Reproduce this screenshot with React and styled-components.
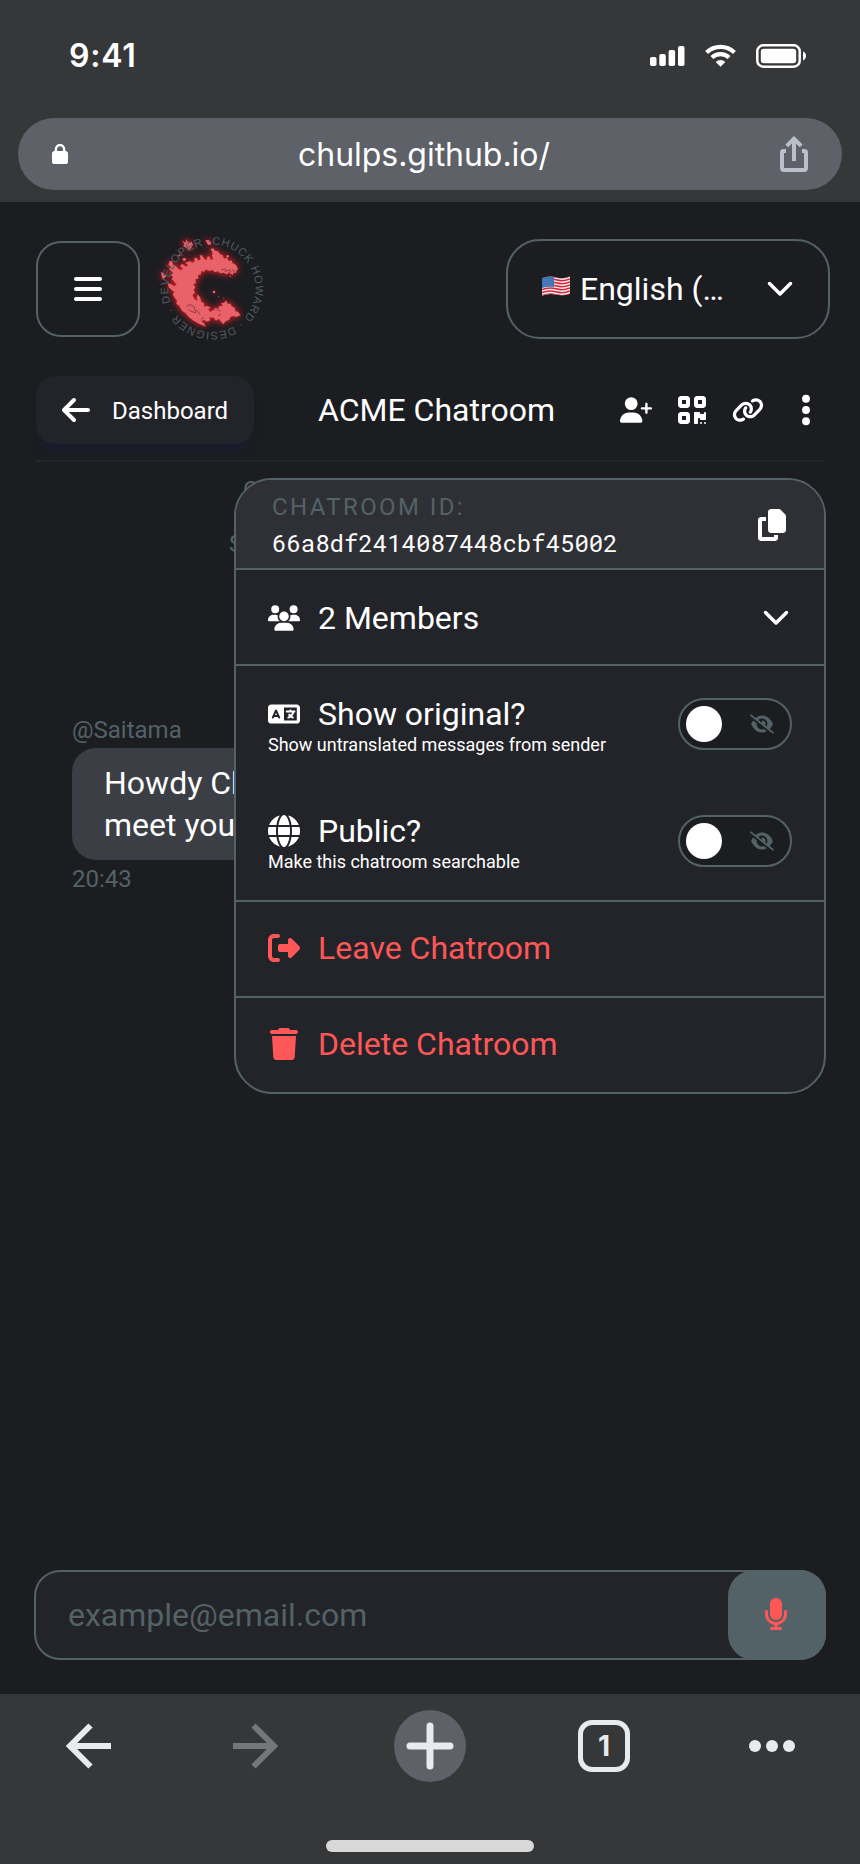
import React from "react";
import styled, { createGlobalStyle } from "styled-components";
import {
  FaArrowLeft,
  FaBars,
  FaChevronDown,
  FaCopy,
  FaEllipsisVertical,
  FaEyeSlash,
  FaGlobe,
  FaLanguage,
  FaLink,
  FaMicrophone,
  FaQrcode,
  FaRightFromBracket,
  FaTrash,
  FaUserPlus,
  FaUsers,
} from "react-icons/fa6";

const line = "#536267";
const chrome = "#363739";
const panel = "#232429";

const GlobalStyle = createGlobalStyle`
  * { box-sizing: border-box; }
  body { margin: 0; background: #1c1d21; }
  button { font: inherit; color: inherit; padding: 0; margin: 0; background: none; border: 0; }
  svg { display: block; flex: none; }
`;

const Screen = styled.div`
  width: 860px;
  height: 1864px;
  display: flex;
  flex-direction: column;
  overflow: hidden;
  background: #1c1d21;
  color: #fff;
  font-family: Roboto, "Liberation Sans", sans-serif;
  font-size: 32px;
  line-height: 40px;
`;

const BrowserTop = styled.header`
  height: 202px;
  padding: 0 18px;
  background: ${chrome};
`;

const StatusBar = styled.div`
  height: 118px;
  padding: 0 36px 7px 51px;
  display: flex;
  align-items: center;
  justify-content: space-between;
`;

const Clock = styled.time`
  font: 600 32px/40px Inter, sans-serif;
  letter-spacing: 0.8px;
`;

const StatusIcons = styled.div`
  display: flex;
  align-items: center;
`;

const AddressBar = styled.div`
  height: 72px;
  padding: 0 34px;
  display: flex;
  align-items: center;
  justify-content: space-between;
  border-radius: 36px;
  background: #5e6168;
`;

const Address = styled.span`
  font: 400 32px/40px Inter, sans-serif;
  letter-spacing: -0.04px;
  padding: 1px 0 0;
`;

const Page = styled.main`
  height: 1492px;
  display: flex;
  flex-direction: column;
`;

const AppHeader = styled.div`
  height: 174px;
  padding: 0 30px 0 36px;
  display: flex;
  align-items: center;
`;

const MenuButton = styled.button`
  width: 104px;
  height: 96px;
  display: grid;
  place-items: center;
  border: 2px solid ${line};
  border-radius: 25px;
`;

const LogoSvg = styled.svg`
  margin-left: 16px;
  overflow: visible;
`;

const LogoText = styled.text`
  font: 400 33px "Liberation Sans", sans-serif;
  fill: #4e5d61;
`;

const Splash = styled.g`
  fill: #e96169;
  filter: drop-shadow(0 0 9px rgba(245, 30, 36, 0.9)) drop-shadow(0 0 12px rgba(200, 30, 36, 0.35));
`;

const LanguageSelect = styled.button`
  width: 324px;
  height: 100px;
  margin-left: auto;
  padding: 0 34px 0 34px;
  display: flex;
  align-items: center;
  border: 2px solid ${line};
  border-radius: 34px;
`;

const LanguageName = styled.span`
  margin-left: 10px;
  margin-right: auto;
`;

const Chevron = styled(FaChevronDown)`
  width: 28px;
  height: 28px;
  margin-bottom: 5px;
`;

const RoomBar = styled.div`
  height: 86px;
  margin: 0 36px;
  display: flex;
  align-items: flex-start;
  border-bottom: 2px solid #232428;
`;

const BackButton = styled.button`
  width: 218px;
  height: 68px;
  padding-left: 24px;
  display: flex;
  align-items: center;
  gap: 20px;
  border-radius: 20px;
  background: ${panel};
  box-shadow: 0 10px 10px -2px rgba(24, 28, 58, 0.5);
  font-size: 24px;
`;

const BackLabel = styled.span`
  padding-top: 2px;
`;

const RoomTitle = styled.h1`
  margin: 0 0 0 64px;
  font-size: 32px;
  font-weight: 400;
  line-height: 68px;
`;

const RoomActions = styled.div`
  height: 68px;
  margin-left: auto;
  display: flex;
  align-items: center;
  gap: 24px;
`;

const Chat = styled.section`
  position: relative;
  flex: 1;
  padding: 1px 72px 0;
`;

const Notice = styled.p`
  margin: 0;
  padding-left: ${(p) => p.$indent}px;
  font-size: 24px;
  line-height: 54px;
  color: ${line};
`;

const Message = styled.article`
  margin-top: 142px;
  display: flex;
  flex-direction: column;
  align-items: flex-start;
`;

const Meta = styled.span`
  font-size: 24px;
  line-height: ${(p) => p.$height}px;
  color: ${line};
`;

const Bubble = styled.div`
  width: 420px;
  padding: 14px 32px;
  border-radius: 24px;
  background: #3c3e45;
  line-height: 42px;
`;

const Menu = styled.div`
  position: absolute;
  top: 16px;
  left: 234px;
  width: 592px;
  overflow: hidden;
  border: 2px solid ${line};
  border-radius: 38px;
  background: ${panel};
`;

const MenuHead = styled.div`
  height: 90px;
  padding: 2px 36px 0 36px;
  display: flex;
  align-items: center;
  justify-content: space-between;
  background: #2f3035;
  border-bottom: 2px solid ${line};
`;

const IdLabel = styled.div`
  padding-top: 1px;
  font-size: 24px;
  line-height: 35px;
  letter-spacing: 2.4px;
  color: ${line};
`;

const IdValue = styled.div`
  font-family: "Roboto Mono", "DejaVu Sans Mono", monospace;
  font-size: 24px;
  line-height: 36px;
`;

const MenuRow = styled.button`
  width: 100%;
  height: ${(p) => (p.$last ? 94 : 96)}px;
  padding: ${(p) => (p.$danger ? "0 34px 2px 32px" : "2px 34px 0 32px")};
  display: flex;
  align-items: center;
  gap: 18px;
  color: ${(p) => (p.$danger ? "#ff5757" : "#fff")};
  border-bottom: ${(p) => (p.$last ? "0" : `2px solid ${line}`)};
`;

const RowLabel = styled.span`
  margin-right: auto;
`;

const Settings = styled.div`
  border-bottom: 2px solid ${line};
`;

const Setting = styled.div`
  height: 117px;
  padding: 0 32px;
  display: flex;
  align-items: center;
  justify-content: space-between;
`;

const SettingText = styled.div`
  padding-top: 3px;
`;

const SettingTitle = styled.div`
  display: flex;
  align-items: center;
  gap: 18px;
  line-height: 38px;
`;

const SettingHint = styled.div`
  font-size: 18px;
  line-height: 24px;
`;

const Toggle = styled.button`
  width: 114px;
  height: 52px;
  margin-bottom: 1px;
  padding: 0 16px 0 6px;
  display: flex;
  align-items: center;
  justify-content: space-between;
  border: 2px solid ${line};
  border-radius: 26px;
  background: #1c1d21;
  color: ${line};
`;

const Knob = styled.span`
  width: 36px;
  height: 36px;
  border-radius: 50%;
  background: #fff;
`;

const Composer = styled.div`
  height: 90px;
  margin: 0 34px 34px;
  display: flex;
  justify-content: space-between;
  align-items: stretch;
  border-radius: 26px;
  background: ${panel};
  box-shadow: inset 0 0 0 2px ${line};
`;

const Placeholder = styled.span`
  padding-left: 34px;
  line-height: 90px;
  color: ${line};
`;

const MicButton = styled.button`
  width: 98px;
  padding: 0 2px 2px 0;
  display: grid;
  place-items: center;
  border-radius: 26px;
  background: ${line};
  color: #ff5757;
`;

const BrowserBottom = styled.footer`
  height: 170px;
  padding: 16px 63px 12px 64px;
  display: flex;
  flex-direction: column;
  justify-content: space-between;
  background: ${chrome};
  color: #e9eaee;
`;

const NavRow = styled.nav`
  height: 72px;
  display: grid;
  grid-template-columns: 168px 162px 184px 171px 48px;
  align-items: center;
`;

const NewTab = styled.button`
  width: 72px;
  height: 72px;
  display: grid;
  place-items: center;
  border-radius: 50%;
  background: #5e6168;
`;

const TabCount = styled.button`
  width: 52px;
  height: 52px;
  border: 5px solid #e9eaee;
  border-radius: 14px;
  color: #e9eaee;
  font: 700 28px/42px Inter, sans-serif;
`;

const HomeIndicator = styled.div`
  width: 208px;
  height: 12px;
  margin-left: 262px;
  border-radius: 6px;
  background: #d8d8d8;
`;

const SignalIcon = () => (
  <svg width="35" height="20" viewBox="0 0 35 20" fill="#fff">
    <rect x="0" y="11" width="6.5" height="9" rx="1.8" />
    <rect x="9.3" y="8" width="6.5" height="12" rx="1.8" />
    <rect x="18.6" y="4" width="6.5" height="16" rx="1.8" />
    <rect x="28" y="0" width="6.5" height="20" rx="1.8" />
  </svg>
);

const StatusGlyph = styled.svg`
  margin-left: 20px;
`;

const WifiIcon = () => (
  <StatusGlyph width="31" height="23" viewBox="0 0 31 23">
    <g fill="none" stroke="#fff" strokeWidth="4.2">
      <path d="M1.6 8.4A20 20 0 0 1 29.4 8.4" />
      <path d="M6.9 13.6A12.4 12.4 0 0 1 24.1 13.6" />
    </g>
    <path d="M15.5 22.4 11 18.1a6.6 6.6 0 0 1 9 0z" fill="#fff" stroke="#fff" strokeWidth=".6" />
  </StatusGlyph>
);

const BatteryIcon = () => (
  <StatusGlyph width="50" height="24" viewBox="0 0 50 24">
    <rect x="1.3" y="1.3" width="42.4" height="21.4" rx="6" fill="none" stroke="#fff" strokeWidth="2.5" />
    <rect x="4.8" y="4.8" width="35.4" height="14.4" rx="3" fill="#fff" />
    <path d="M47 7.6c4 1.6 4 7.2 0 8.8z" fill="#fff" />
  </StatusGlyph>
);

const LockIcon = () => (
  <svg width="16" height="20" viewBox="0 0 16 20">
    <rect y="7" width="16" height="13" rx="2.6" fill="#fff" />
    <path d="M3.9 8V5.2a4.1 4.1 0 0 1 8.2 0V8" fill="none" stroke="#fff" strokeWidth="2.4" />
  </svg>
);

const ShareIcon = () => (
  <svg width="28" height="36" viewBox="0 0 28 36" fill="none" stroke="#bbbfcb" strokeWidth="4">
    <path d="M6 15H3.6A1.6 1.6 0 0 0 2 16.6V32a2 2 0 0 0 2 2h20a2 2 0 0 0 2-2V16.6a1.6 1.6 0 0 0-1.6-1.6H22" />
    <path d="M14 25V3M6.8 9.9 14 2.8l7.2 7.1" />
  </svg>
);

const FlagSvg = styled.svg`
  margin-bottom: 6px;
`;

const FlagIcon = () => (
  <FlagSvg width="28" height="20" viewBox="0 0 28 20">
    <defs>
      <clipPath id="flag-wave">
        <path d="M0 2.2Q7-.6 14 1.4T28 .6V17.8Q21 20.4 14 18.6T0 19.8z" />
      </clipPath>
    </defs>
    <g clipPath="url(#flag-wave)">
      <rect width="28" height="20" fill="#f2f0f2" />
      {[0, 1, 2, 3, 4, 5, 6].map((i) => (
        <path
          key={i}
          d={`M0 ${i * 3 + 1.6}Q7 ${i * 3 - 1.2} 14 ${i * 3 + 0.8}T28 ${i * 3}`}
          fill="none"
          stroke="#d8273b"
          strokeWidth="1.5"
        />
      ))}
      <path d="M0 0H12V11Q6 10 0 12z" fill="#3f72b5" />
      <path d="M1.5 4H11M1.5 6.5H11M1.5 9H11" stroke="#6f98cf" strokeWidth=".7" strokeDasharray="1 1" />
    </g>
  </FlagSvg>
);

const Logo = () => (
  <LogoSvg width="114" height="114" viewBox="468 66 342 342">
    <defs>
      <path id="logo-ring" d="M636 104a131 131 0 1 1-.1 0" />
    </defs>
    <Splash>
      <path
        d="M714 178L708 165L698 160L694 151L686 153L681 143L672 146L668 136L660 133L654 124L645 122L640 115L631 117L638 128L636 137L640 147
        L632 150L628 139L622 140L620 150L613 147L606 136L599 136L602 147L596 152L589 143L583 144L584 154L576 159L571 153L563 156
        L555 158L565 166L557 170L549 163L544 168L549 176L541 181L533 175L528 168L520 165L516 154L509 153L505 164L513 170L507 177
        L514 183L520 190L512 194L519 201L515 208L523 215L530 224L522 229L513 222L503 220L506 232L515 240L523 246L518 252L523 262
        L531 272L529 281L538 288L546 302L556 309L567 322L582 333L598 342L618 350L612 340L603 333L613 330L621 335L631 331L628 322
        L641 323L648 332L657 326L662 334L670 343L677 333L688 330L690 322L700 318L708 321L722 316L714 305L706 304L704 293L695 289
        L692 281L683 281L678 271L672 279L664 279L668 287L658 289L654 297L645 293L640 301L630 306L625 298L632 292L621 288L613 291
        L612 279L604 276L601 263L593 253L590 262L593 273L584 268L577 256L585 248L581 239L586 232L580 223L588 219L586 207L595 206
        L594 195L603 193L603 183L612 185L618 178L627 183L637 180L645 187L654 184L660 190L671 188L680 193L689 188L698 195L701 188
        L708 188L710 181Z"
      />
      <path d="M546 91L556 99L559 87L564 98L574 95L579 104L573 114L567 121L559 113L550 108L553 103Z" />
      <path d="M616 91L627 90L634 98L631 105L624 104Z" />
      <path d="M483 186L491 190L499 198L492 206L486 203Z" />
      <circle cx="642" cy="246" r="4" />
      <circle cx="655" cy="260" r="1.6" />
      <circle cx="671" cy="264" r="1.6" />
      <circle cx="553" cy="148" r="5" />
      <circle cx="538" cy="136" r="3" />
      <circle cx="546" cy="168" r="5" />
      <circle cx="683" cy="139" r="4" />
      <circle cx="691" cy="199" r="2" />
    </Splash>
    <path
      d="M560 290q5-8 13-5l10 6 4 14M566 299q10 8 22 9M590 300l10 14M604 328l8-6M640 293l9 9M652 298l10 6M664 180l14-4M674 184l16-5M684 190l10-8M698 178l4 8M655 317l8-4"
      fill="none"
      stroke="#7c3036"
      strokeWidth="2.5"
    />
    <LogoText>
      <textPath href="#logo-ring" textLength="820" lengthAdjust="spacing">
        CHUCK HOWARD · DESIGNER · DEVELOPER ·
      </textPath>
    </LogoText>
  </LogoSvg>
);

const ArrowIcon = ({ forward }) => (
  <svg width="48" height="48" viewBox="0 0 48 48">
    <path
      d={forward ? "M1 24H42M21.500 3.500 42 24 21.500 44.500" : "M47 24H6M26.500 3.500 6 24l20.500 20.500"}
      fill="none"
      stroke={forward ? "#757678" : "#e9eaee"}
      strokeWidth="6"
    />
  </svg>
);

const PlusIcon = () => (
  <svg width="48" height="48" viewBox="0 0 48 48" stroke="#e9eaee" strokeWidth="7" strokeLinecap="round">
    <path d="M24 4V44M4 24H44" />
  </svg>
);

const DotsIcon = () => (
  <svg width="48" height="12" viewBox="0 0 48 12" fill="#e9eaee">
    <circle cx="6" cy="6" r="6" />
    <circle cx="23" cy="6" r="6" />
    <circle cx="40" cy="6" r="6" />
  </svg>
);

const ToggleSetting = ({ icon, title, hint }) => (
  <Setting>
    <SettingText>
      <SettingTitle>
        {icon}
        {title}
      </SettingTitle>
      <SettingHint>{hint}</SettingHint>
    </SettingText>
    <Toggle>
      <Knob />
      <FaEyeSlash size={24} />
    </Toggle>
  </Setting>
);

const ChatroomMenu = () => (
  <Menu>
    <MenuHead>
      <div>
        <IdLabel>CHATROOM ID:</IdLabel>
        <IdValue>66a8df2414087448cbf45002</IdValue>
      </div>
      <FaCopy size={32} />
    </MenuHead>
    <MenuRow>
      <FaUsers size={32} />
      <RowLabel>2 Members</RowLabel>
      <Chevron />
    </MenuRow>
    <Settings>
      <ToggleSetting
        icon={<FaLanguage size={32} />}
        title="Show original?"
        hint="Show untranslated messages from sender"
      />
      <ToggleSetting icon={<FaGlobe size={32} />} title="Public?" hint="Make this chatroom searchable" />
    </Settings>
    <MenuRow $danger>
      <FaRightFromBracket size={32} />
      <RowLabel>Leave Chatroom</RowLabel>
    </MenuRow>
    <MenuRow $danger $last>
      <FaTrash size={32} />
      <RowLabel>Delete Chatroom</RowLabel>
    </MenuRow>
  </Menu>
);

export default function App() {
  return (
    <Screen>
      <GlobalStyle />
      <BrowserTop>
        <StatusBar>
          <Clock>9:41</Clock>
          <StatusIcons>
            <SignalIcon />
            <WifiIcon />
            <BatteryIcon />
          </StatusIcons>
        </StatusBar>
        <AddressBar>
          <LockIcon />
          <Address>chulps.github.io/</Address>
          <ShareIcon />
        </AddressBar>
      </BrowserTop>

      <Page>
        <AppHeader>
          <MenuButton>
            <FaBars size={32} />
          </MenuButton>
          <Logo />
          <LanguageSelect>
            <FlagIcon />
            <LanguageName>English (…</LanguageName>
            <Chevron />
          </LanguageSelect>
        </AppHeader>

        <RoomBar>
          <BackButton>
            <FaArrowLeft size={32} />
            <BackLabel>Dashboard</BackLabel>
          </BackButton>
          <RoomTitle>ACME Chatroom</RoomTitle>
          <RoomActions>
            <FaUserPlus size={32} />
            <FaQrcode size={32} />
            <FaLink size={32} />
            <FaEllipsisVertical size={36} />
          </RoomActions>
        </RoomBar>

        <Chat>
          <Notice $indent={171}>C</Notice>
          <Notice $indent={157}>S</Notice>
          <Message>
            <Meta $height={35}>@Saitama</Meta>
            <Bubble>
              Howdy Ch
              <br />
              meet you
            </Bubble>
            <Meta $height={38}>20:43</Meta>
          </Message>
          <ChatroomMenu />
        </Chat>

        <Composer>
          <Placeholder>example@email.com</Placeholder>
          <MicButton>
            <FaMicrophone size={32} />
          </MicButton>
        </Composer>
      </Page>

      <BrowserBottom>
        <NavRow>
          <ArrowIcon />
          <ArrowIcon forward />
          <NewTab>
            <PlusIcon />
          </NewTab>
          <TabCount>1</TabCount>
          <DotsIcon />
        </NavRow>
        <HomeIndicator />
      </BrowserBottom>
    </Screen>
  );
}
